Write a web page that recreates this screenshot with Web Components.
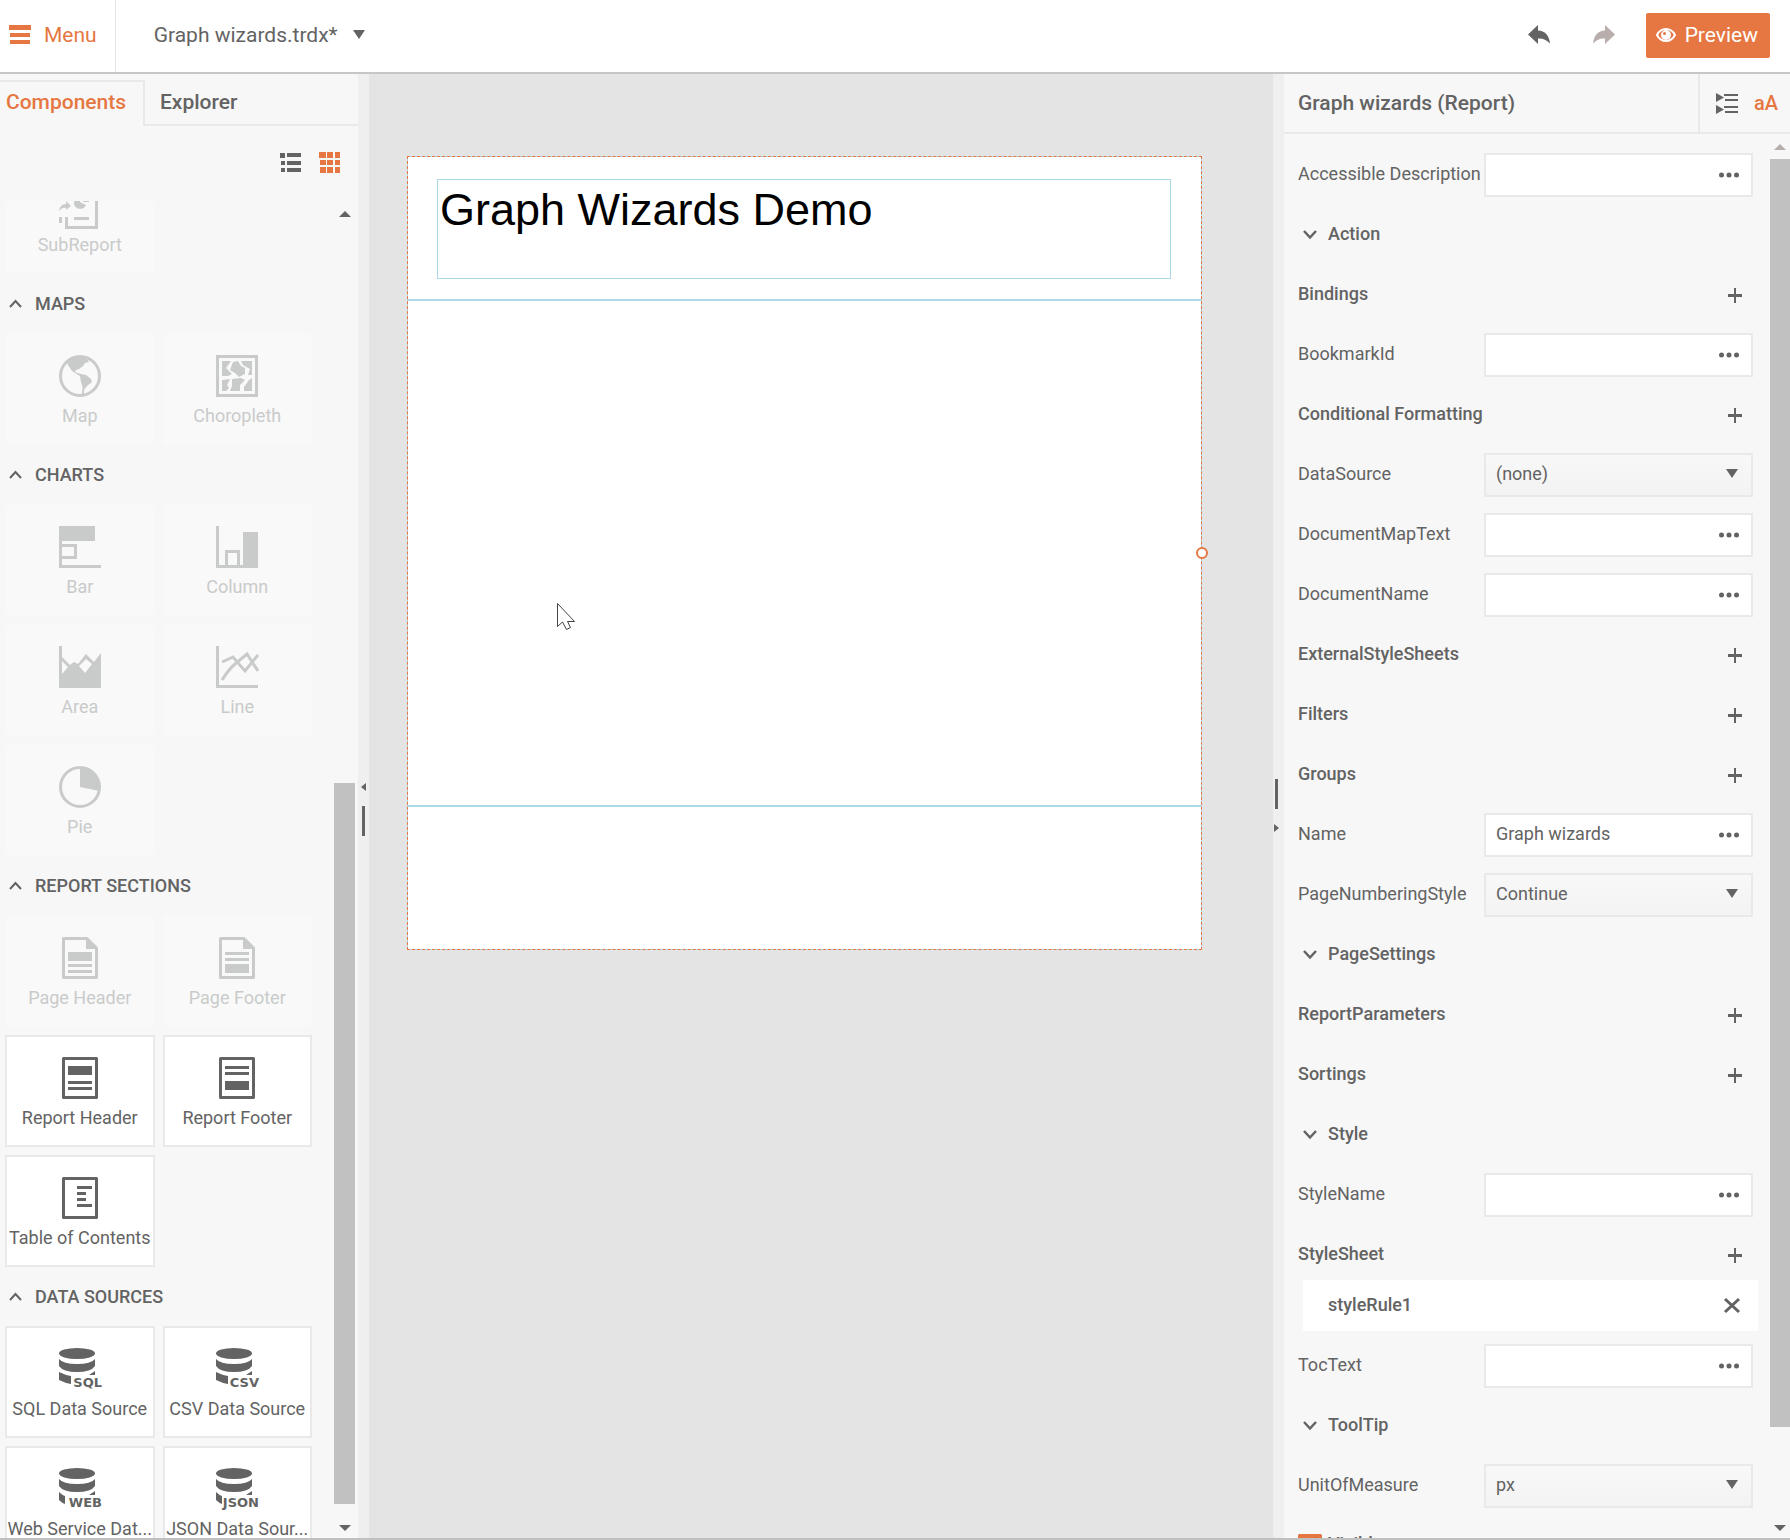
<!DOCTYPE html>
<html lang="en">
<head>
<meta charset="utf-8">
<title>Report Designer</title>
<style>
  html, body {
    height: 100%;
    margin: 0;
  }
  body {
    --accent: #e67742;
    --text: #636363;
    --line: #e9e9e9;
    --panel: #f7f7f7;
    --thumb: #c1c1c1;
    font-family: Roboto, "Liberation Sans", sans-serif;
    font-size: 18px;
    line-height: 24px;
    color: var(--text);
    background: #e4e4e4;
    overflow: hidden;
  }
</style>
</head>
<body>
<report-designer></report-designer>

<script>
const DOC = '<path d="M4.5 1.5H28L37.5 11V40.5H4.5z" fill="none" stroke="currentColor" stroke-width="3" stroke-linejoin="round"/><path d="M27 1L39 11.5V12H27z"/>';
const SHEET = '<rect x="4.5" y="1.5" width="33" height="39" fill="none" stroke="currentColor" stroke-width="3" stroke-linejoin="round"/>';

function dataIcon(label, block) {
  return [42, 42, `
    <ellipse cx="18" cy="5.5" rx="18" ry="5.5"/>
    <path d="M0 11Q4 16 18 16T36 11V18Q32 24 18 24T0 18z"/>
    <path d="M0 24Q${block / 2} 27 ${block} 28V36Q${block / 2} 35 0 32z"/>
    <path d="M36 23v4h-6z"/>
    <text x="43" y="39" text-anchor="end" font-family="DejaVu Sans, sans-serif" font-size="13" font-weight="700">${label}</text>`];
}

// name: [width, height, markup]
const ICONS = {
  menu: [22, 19, '<path d="M0 0h22v5H0zM1 8h20v4H1zM1 15h20v4H1z"/>'],
  down: [12, 9, '<path d="M0 0h12L6 9z"/>'],
  undo: [22, 19, '<path d="M0 9.5L10 0V5.500C17 6 21 10 22 18.500C18 14 14 13 10 13.500V19z"/>'],
  redo: [22, 19, '<path d="M22 9.500L12 0V5.500C5 6 1 10 0 18.500C4 14 8 13 12 13.500V19z"/>'],
  eye: [20, 14, '<path d="M1 7Q4 1 10 1T19 7Q16 13 10 13T1 7z" fill="none" stroke="currentColor" stroke-width="2"/><circle cx="10" cy="7" r="5"/><circle cx="8.500" cy="5.500" r="1.500" fill="#e67742"/>'],
  list: [21, 20, '<path d="M0 0h5v5H0zM7 0h14v4H7zM1 8h4v4H1zM7 8h14v4H7zM1 15h4v4H1zM7 15h14v4H7z"/>'],
  grid: [21, 21, '<path d="M0 0h7v6H0zM8 0h6v6H8zM16 0h5v6h-5zM1 8h6v5H1zM8 8h6v5H8zM16 8h5v5h-5zM1 15h6v6H1zM8 15h6v6H8zM16 15h5v6h-5z"/>'],
  tree: [22, 21, '<path d="M0 0L8 4.500 0 9zM0 12L8 16.500 0 21zM8 1h14v2H8zM9 6h13v2H9zM8 13h14v2H8zM9 18h13v2H9z"/>'],
  up: [13, 9, '<path d="M1 8L6.500 2L12 8" fill="none" stroke="currentColor" stroke-width="2"/>'],
  expand: [14, 9, '<path d="M1 1L7 7.500L13 1" fill="none" stroke="currentColor" stroke-width="2.500"/>'],
  plus: [14, 15, '<path d="M0 6h14v3H0zM6 0h2v15H6z"/>'],
  close: [16, 15, '<path d="M1 1L15 14M15 1L1 14" stroke="currentColor" stroke-width="3"/>'],
  dots: [20, 6, '<circle cx="2.500" cy="3" r="2.500"/><circle cx="10" cy="3" r="2.500"/><circle cx="17.500" cy="3" r="2.500"/>'],
  scrollUp: [12, 6, '<path d="M0 6h12L6 0z"/>'],
  scrollDown: [12, 6, '<path d="M0 0h12L6 6z"/>'],
  left: [5, 8, '<path d="M5 0v8L0 4z"/>'],
  right: [5, 8, '<path d="M0 0v8L5 4z"/>'],
  pointer: [19, 28, '<path d="M.5 .5V23.500L5.500 19L9.500 26.500L13.500 24.500L10.500 18.500H17.500z" fill="#fff" stroke="#444"/>'],
  subreport: [42, 42, '<path d="M36 6h3v39H6V33h3v9h27zM0 33h3v6H0zM15 33h15v3H15zM0 27Q1 20 7 20V17L12 22L7 26V24Q3 23 0 27z"/><path d="M15 20a6.500 7 0 0 0 12 1L21 18V14Q15 14 15 20zM24 12h6v6h-6z"/>'],
  map: [42, 42, '<circle cx="21" cy="21" r="19.500" fill="none" stroke="currentColor" stroke-width="3"/><path d="M8 8L13 3L24 2L29 5L30 7L26 8L24 11L20 14L17 15L16 17L22 19L27 20L32 24L33 27L28 31L25 35L25 40H23L23.500 32L22 27L21 21L13 16L9 10z"/>'],
  choropleth: [42, 42, '<rect x="1.500" y="1.500" width="39" height="39" fill="none" stroke="currentColor" stroke-width="3"/><path d="M6 6h9l-5 7 6 6-4 2H6zM17 7l5-1 3 5 4 2v6l-6 3-4-4-5-3zM25 6h11v14h-4l2-6-7-4zM6 25l8-1-3 6 2 3-3 3H6zM16 24l9-1 4 2-5 5v6H14l2-5zM33 25l3-2v13h-8v-4z"/>'],
  bar: [42, 42, '<path d="M0 0h36v15H3v3h15v15H3v6h39v3H0zM3 21v9h12v-9z" fill-rule="evenodd"/>'],
  column: [42, 42, '<path d="M0 0h3v39h6V24h15v15h3V6h15v36H0zM12 27v12h9V27z" fill-rule="evenodd"/>'],
  area: [42, 42, '<path d="M0 0h3v11l8 8 4-3 4 2 8-10 8 8 7-9v35H0zM3 15v13l6-7zM27 13l-7 7 6 7 7-9z" fill-rule="evenodd"/>'],
  line: [42, 42, '<path d="M0 0h3v39h39v3H0z"/><path d="M6 34Q13 23 19 18L31 8L42 25M6 16L17 11L29 25L42 9" fill="none" stroke="currentColor" stroke-width="3"/>'],
  pie: [42, 42, '<circle cx="21" cy="21" r="19.500" fill="none" stroke="currentColor" stroke-width="3"/><path d="M21 21V1A20 20 0 0 1 40 25z"/>'],
  pageHeader: [42, 42, `${DOC}<path d="M9 15h24v9H9zM9 27h24v3H9zM9 33h24v3H9z"/>`],
  pageFooter: [42, 42, `${DOC}<path d="M9 15h24v3H9zM9 21h24v3H9zM9 27h24v9H9z"/>`],
  reportHeader: [42, 42, `${SHEET}<path d="M9 9h24v9H9zM9 24h24v3H9zM9 30h24v3H9z"/>`],
  reportFooter: [42, 42, `${SHEET}<path d="M9 9h24v3H9zM9 15h24v3H9zM9 24h24v9H9z"/>`],
  toc: [42, 42, `${SHEET}<path d="M18 9h15v3H18zM18 15h9v3h-9zM18 21h9v3h-9zM18 27h15v3H18z"/>`],
  sql: dataIcon('SQL', 12),
  csv: dataIcon('CSV', 12),
  web: dataIcon('WEB', 6),
  json: dataIcon('JSON', 6),
};

class DesignerIcon extends HTMLElement {
  connectedCallback() {
    const [width, height, markup] = ICONS[this.getAttribute('name')];
    this.attachShadow({ mode: 'open' }).innerHTML = `
    <style>
      :host { display: block; flex: none; }
      svg { display: block; overflow: visible; fill: currentColor; }
    </style>
    <svg width="${width}" height="${height}" viewBox="0 0 ${width} ${height}" aria-hidden="true">${markup}</svg>`;
  }
}
customElements.define('designer-icon', DesignerIcon);

class DesignerHeader extends HTMLElement {
  connectedCallback() {
    this.attachShadow({ mode: 'open' }).innerHTML = `
    <style>
      :host {
        display: flex;
        align-items: center;
        height: 72px;
        background: #fff;
        border-bottom: 2px solid #c6c6c6;
      }
      button {
        display: flex;
        align-items: center;
        padding: 0;
        border: 0;
        background: none;
        font: 21px/24px Roboto, sans-serif;
        color: inherit;
      }
      .menu {
        gap: 13px;
        height: 100%;
        padding: 0 18px 2px 9px;
        border-right: 1px solid #e4e4e4;
        color: var(--accent);
      }
      .file { gap: 15px; padding: 0 38px 2px; }
      .menu designer-icon, .file designer-icon { margin-bottom: 2px; }
      .tools {
        display: flex;
        align-items: center;
        gap: 43px;
        margin-left: auto;
        padding: 0 20px 2px 0;
      }
      .history { padding-bottom: 2px; }
      .redo { color: #b8aeab; margin-right: -12px; }
      .preview {
        gap: 9px;
        height: 45px;
        padding: 0 12px 0 10px;
        border-radius: 2px;
        background: var(--accent);
        color: #fff;
      }
    </style>
    <button class="menu"><designer-icon name="menu"></designer-icon>Menu</button>
    <button class="file">Graph wizards.trdx*<designer-icon name="down"></designer-icon></button>
    <div class="tools">
      <button class="history" aria-label="Undo"><designer-icon name="undo"></designer-icon></button>
      <button class="history redo" aria-label="Redo"><designer-icon name="redo"></designer-icon></button>
      <button class="preview"><designer-icon name="eye"></designer-icon>Preview</button>
    </div>`;
  }
}
customElements.define('designer-header', DesignerHeader);

// Vertical scrollbar; the thumb is placed by the flex weights in "before" and "after".
class ScrollTrack extends HTMLElement {
  connectedCallback() {
    const before = this.getAttribute('before');
    const size = this.getAttribute('size');
    const after = this.getAttribute('after');
    this.attachShadow({ mode: 'open' }).innerHTML = `
    <style>
      :host {
        display: flex;
        flex-direction: column;
        align-items: center;
        box-sizing: border-box;
        padding: 10px 0 7px;
      }
      .top { color: var(--arrow-top, inherit); }
      .track {
        flex: 1;
        align-self: stretch;
        display: flex;
        flex-direction: column;
        margin: 9px 0 21px;
      }
      .thumb { background: var(--thumb); }
    </style>
    <designer-icon class="top" name="scrollUp"></designer-icon>
    <div class="track">
      <div style="flex: ${before}"></div>
      <div class="thumb" style="flex: ${size}"></div>
      <div style="flex: ${after}"></div>
    </div>
    <designer-icon name="scrollDown"></designer-icon>`;
  }
}
customElements.define('scroll-track', ScrollTrack);

class ComponentTile extends HTMLElement {
  connectedCallback() {
    this.attachShadow({ mode: 'open' }).innerHTML = `
    <style>
      :host { display: block; min-width: 0; }
      button {
        display: flex;
        flex-direction: column;
        align-items: center;
        gap: 7px;
        box-sizing: border-box;
        width: 100%;
        height: 112px;
        padding: 20px 0 0;
        border: 2px solid var(--line);
        background: #fff;
        font: 18px/24px Roboto, sans-serif;
        color: var(--text);
      }
      button:disabled {
        border-color: #f8f8f8;
        background: #f9f9f9;
        color: #c9cbca;
      }
      span { white-space: nowrap; }
    </style>
    <button ${this.hasAttribute('disabled') ? 'disabled' : ''}>
      <designer-icon name="${this.getAttribute('icon')}"></designer-icon>
      <span><slot></slot></span>
    </button>`;
  }
}
customElements.define('component-tile', ComponentTile);

class ComponentGroup extends HTMLElement {
  connectedCallback() {
    const heading = this.getAttribute('heading');
    this.attachShadow({ mode: 'open' }).innerHTML = `
    <style>
      :host { display: block; }
      h3 {
        display: flex;
        align-items: center;
        gap: 13px;
        height: 59px;
        margin: 0;
        padding-left: 4px;
        font-size: 18px;
        font-weight: 500;
      }
      div {
        display: grid;
        grid-template-columns: 1fr 1fr;
        gap: 8px;
      }
    </style>
    ${heading ? `<h3><designer-icon name="up"></designer-icon>${heading}</h3>` : ''}
    <div><slot></slot></div>`;
  }
}
customElements.define('component-group', ComponentGroup);

class ComponentsPanel extends HTMLElement {
  connectedCallback() {
    this.attachShadow({ mode: 'open' }).innerHTML = `
    <style>
      :host {
        display: flex;
        flex-direction: column;
        min-height: 0;
        background: var(--panel);
      }
      button {
        padding: 0;
        border: 0;
        background: none;
        font: 500 21px/24px Roboto, sans-serif;
        color: inherit;
      }
      .tabs { display: flex; height: 46px; padding-top: 6px; }
      .tabs button { text-align: left; border: 0 solid var(--line); }
      .tabs .active {
        width: 145px;
        padding: 0 0 4px 6px;
        box-sizing: border-box;
        border-width: 2px 2px 0 0;
        color: var(--accent);
      }
      .tabs .rest { flex: 1; padding: 0 0 0 15px; border-bottom-width: 2px; }
      .view {
        display: flex;
        justify-content: flex-end;
        gap: 18px;
        padding: 26px 18px 28px 0;
      }
      .view .active { color: var(--accent); }
      .body { flex: 1; display: flex; min-height: 0; }
      .list { flex: 1; padding-left: 5px; overflow: hidden; }
      .list component-group:first-child { margin-top: -39px; }
      scroll-track { width: 21px; margin: 0 3px 0 22px; }
    </style>
    <nav class="tabs">
      <button class="active">Components</button>
      <button class="rest">Explorer</button>
    </nav>
    <div class="view">
      <button aria-label="List view"><designer-icon name="list"></designer-icon></button>
      <button class="active" aria-label="Grid view"><designer-icon name="grid"></designer-icon></button>
    </div>
    <div class="body">
      <div class="list">
        <component-group>
          <component-tile icon="subreport" disabled>SubReport</component-tile>
        </component-group>
        <component-group heading="MAPS">
          <component-tile icon="map" disabled>Map</component-tile>
          <component-tile icon="choropleth" disabled>Choropleth</component-tile>
        </component-group>
        <component-group heading="CHARTS">
          <component-tile icon="bar" disabled>Bar</component-tile>
          <component-tile icon="column" disabled>Column</component-tile>
          <component-tile icon="area" disabled>Area</component-tile>
          <component-tile icon="line" disabled>Line</component-tile>
          <component-tile icon="pie" disabled>Pie</component-tile>
        </component-group>
        <component-group heading="REPORT SECTIONS">
          <component-tile icon="pageHeader" disabled>Page Header</component-tile>
          <component-tile icon="pageFooter" disabled>Page Footer</component-tile>
          <component-tile icon="reportHeader">Report Header</component-tile>
          <component-tile icon="reportFooter">Report Footer</component-tile>
          <component-tile icon="toc">Table of Contents</component-tile>
        </component-group>
        <component-group heading="DATA SOURCES">
          <component-tile icon="sql">SQL Data Source</component-tile>
          <component-tile icon="csv">CSV Data Source</component-tile>
          <component-tile icon="web">Web Service Dat...</component-tile>
          <component-tile icon="json">JSON Data Sour...</component-tile>
        </component-group>
      </div>
      <scroll-track before="557" size="721" after="0"></scroll-track>
    </div>`;
  }
}
customElements.define('components-panel', ComponentsPanel);

class PanelSplitter extends HTMLElement {
  connectedCallback() {
    const toRight = this.getAttribute('arrow') === 'right';
    const parts = [`<designer-icon name="${this.getAttribute('arrow')}"></designer-icon>`, '<i></i>'];
    if (toRight) parts.reverse();
    this.attachShadow({ mode: 'open' }).innerHTML = `
    <style>
      :host {
        display: flex;
        flex-direction: column;
        align-items: center;
        justify-content: center;
        gap: 15px;
        padding: ${toRight ? '0 4px 2px 0' : '6px 0 0'};
        background: #efefef;
      }
      i { width: 3px; height: 30px; background: var(--text); }
    </style>
    ${parts.join('')}`;
  }
}
customElements.define('panel-splitter', PanelSplitter);

class ReportCanvas extends HTMLElement {
  connectedCallback() {
    this.attachShadow({ mode: 'open' }).innerHTML = `
    <style>
      :host {
        display: block;
        min-width: 0;
        padding: 82px 71px 0 38px;
        background: #e4e4e4;
      }
      .page {
        position: relative;
        border: 1px dashed var(--accent);
        background: linear-gradient(#fff, #fff) padding-box, #add8e6;
      }
      section { border-bottom: 2px solid #add8e6; }
      .head { padding: 22px 30px 20px 29px; }
      .detail { height: 504px; }
      .foot { height: 142px; border: 0; }
      .text {
        height: 88px;
        padding: 5px 2px;
        border: 1px solid #add8e6;
        box-sizing: content-box;
        font: 45px/50px "Liberation Sans", Arial, sans-serif;
        color: #000;
      }
      .handle {
        position: absolute;
        right: -7px;
        top: 50%;
        width: 8px;
        height: 8px;
        transform: translateY(-50%);
        border: 2px solid var(--accent);
        border-radius: 50%;
        background: #fff;
      }
      .pointer { position: absolute; left: 149px; top: 446px; }
    </style>
    <div class="page">
      <section class="head"><div class="text">Graph Wizards Demo</div></section>
      <section class="detail"></section>
      <section class="foot"></section>
      <span class="handle"></span>
      <designer-icon class="pointer" name="pointer"></designer-icon>
    </div>`;
  }
}
customElements.define('report-canvas', ReportCanvas);

// kind: text, select, list, group or check
class PropertyRow extends HTMLElement {
  connectedCallback() {
    const kind = this.getAttribute('kind');
    const label = this.getAttribute('label');
    const value = this.getAttribute('value') || '';
    const rows = {
      text: `<label for="field">${label}</label>
        <div class="box"><input id="field" type="text" value="${value}"><button aria-label="Edit ${label}"><designer-icon name="dots"></designer-icon></button></div>`,
      select: `<label for="field">${label}</label>
        <div class="box drop"><select id="field"><option>${value}</option></select><designer-icon name="down"></designer-icon></div>`,
      list: `<strong>${label}</strong><button class="add" aria-label="Add to ${label}"><designer-icon name="plus"></designer-icon></button>`,
      group: `<button class="toggle"><designer-icon name="expand"></designer-icon>${label}</button>`,
      check: `<label class="tick"><input type="checkbox" checked><span>${label}</span></label>`,
    };
    this.attachShadow({ mode: 'open' }).innerHTML = `
    <style>
      :host {
        display: flex;
        align-items: center;
        justify-content: space-between;
        height: 60px;
        padding: 0 17px 0 14px;
      }
      label, strong {
        padding-bottom: 2px;
        font-weight: 400;
        white-space: nowrap;
      }
      strong { font-weight: 500; }
      button {
        padding: 0;
        border: 0;
        background: none;
        color: inherit;
      }
      .box {
        display: flex;
        align-items: center;
        box-sizing: border-box;
        width: 269px;
        height: 44px;
        margin-bottom: 1px;
        border: 2px solid var(--line);
        background: #fff;
      }
      .box button { padding: 10px 12px 10px 0; }
      input[type="text"], select {
        flex: 1;
        min-width: 0;
        height: 38px;
        padding: 0 0 2px 10px;
        border: 0;
        background: none;
        font: 18px/24px Roboto, sans-serif;
        color: inherit;
      }
      .drop {
        padding-right: 13px;
        background: linear-gradient(#f8f8f8, #f3f3f3);
      }
      select { appearance: none; }
      .drop designer-icon { margin-bottom: 2px; }
      .add { margin-right: 11px; }
      .toggle {
        display: flex;
        align-items: center;
        gap: 11px;
        padding: 0 0 2px 5px;
        font: 500 18px/24px Roboto, sans-serif;
      }
      .tick {
        display: flex;
        align-items: center;
        gap: 6px;
        padding: 0;
        font-weight: 500;
      }
      .tick input { width: 24px; height: 24px; margin: 0; accent-color: var(--accent); }
      .tick span { margin-bottom: 4px; }
    </style>
    ${rows[kind]}`;
  }
}
customElements.define('property-row', PropertyRow);

class StyleRule extends HTMLElement {
  connectedCallback() {
    this.attachShadow({ mode: 'open' }).innerHTML = `
    <style>
      :host {
        display: flex;
        align-items: center;
        justify-content: space-between;
        height: 51px;
        margin: -5px 12px 5px 19px;
        padding: 0 18px 0 25px;
        background: #fff;
        font-weight: 500;
      }
      span { padding-bottom: 2px; }
      button { padding: 0; border: 0; background: none; color: inherit; }
    </style>
    <span><slot></slot></span>
    <button aria-label="Remove"><designer-icon name="close"></designer-icon></button>`;
  }
}
customElements.define('style-rule', StyleRule);

class PropertiesPanel extends HTMLElement {
  connectedCallback() {
    this.attachShadow({ mode: 'open' }).innerHTML = `
    <style>
      :host {
        display: flex;
        flex-direction: column;
        min-height: 0;
        background: var(--panel);
      }
      header {
        display: flex;
        height: 58px;
        border-bottom: 2px solid var(--line);
      }
      h2 {
        flex: 1;
        margin: 0;
        padding: 17px 14px;
        font-size: 21px;
        font-weight: 500;
        line-height: 24px;
      }
      .modes {
        display: flex;
        align-items: center;
        gap: 16px;
        padding: 0 12px 0 16px;
        border-left: 2px solid var(--line);
      }
      button {
        padding: 0;
        border: 0;
        background: none;
        font: 500 20px/24px Roboto, sans-serif;
        color: inherit;
      }
      .case { color: var(--accent); }
      .body { flex: 1; display: flex; min-height: 0; }
      .rows { flex: 1; padding-top: 11px; overflow: hidden; }
      scroll-track { width: 20px; --arrow-top: #b8aeab; }
    </style>
    <header>
      <h2>Graph wizards (Report)</h2>
      <div class="modes">
        <button aria-label="Sort by category"><designer-icon name="tree"></designer-icon></button>
        <button class="case">aA</button>
      </div>
    </header>
    <div class="body">
      <div class="rows">
        <property-row kind="text" label="Accessible Description"></property-row>
        <property-row kind="group" label="Action"></property-row>
        <property-row kind="list" label="Bindings"></property-row>
        <property-row kind="text" label="BookmarkId"></property-row>
        <property-row kind="list" label="Conditional Formatting"></property-row>
        <property-row kind="select" label="DataSource" value="(none)"></property-row>
        <property-row kind="text" label="DocumentMapText"></property-row>
        <property-row kind="text" label="DocumentName"></property-row>
        <property-row kind="list" label="ExternalStyleSheets"></property-row>
        <property-row kind="list" label="Filters"></property-row>
        <property-row kind="list" label="Groups"></property-row>
        <property-row kind="text" label="Name" value="Graph wizards"></property-row>
        <property-row kind="select" label="PageNumberingStyle" value="Continue"></property-row>
        <property-row kind="group" label="PageSettings"></property-row>
        <property-row kind="list" label="ReportParameters"></property-row>
        <property-row kind="list" label="Sortings"></property-row>
        <property-row kind="group" label="Style"></property-row>
        <property-row kind="text" label="StyleName"></property-row>
        <property-row kind="list" label="StyleSheet"></property-row>
        <style-rule>styleRule1</style-rule>
        <property-row kind="text" label="TocText"></property-row>
        <property-row kind="group" label="ToolTip"></property-row>
        <property-row kind="select" label="UnitOfMeasure" value="px"></property-row>
        <property-row kind="check" label="Visible"></property-row>
      </div>
      <scroll-track before="0" size="1268" after="77"></scroll-track>
    </div>`;
  }
}
customElements.define('properties-panel', PropertiesPanel);

class ReportDesigner extends HTMLElement {
  connectedCallback() {
    this.attachShadow({ mode: 'open' }).innerHTML = `
    <style>
      :host {
        display: flex;
        flex-direction: column;
        box-sizing: border-box;
        height: 100vh;
        border-bottom: 2px solid #c0c0c0;
      }
      main {
        flex: 1;
        display: grid;
        grid-template-columns: 358px 11px 1fr 11px 506px;
        grid-template-rows: minmax(0, 1fr);
        min-height: 0;
      }
    </style>
    <designer-header></designer-header>
    <main>
      <components-panel></components-panel>
      <panel-splitter arrow="left"></panel-splitter>
      <report-canvas></report-canvas>
      <panel-splitter arrow="right"></panel-splitter>
      <properties-panel></properties-panel>
    </main>`;
  }
}
customElements.define('report-designer', ReportDesigner);
</script>
</body>
</html>
